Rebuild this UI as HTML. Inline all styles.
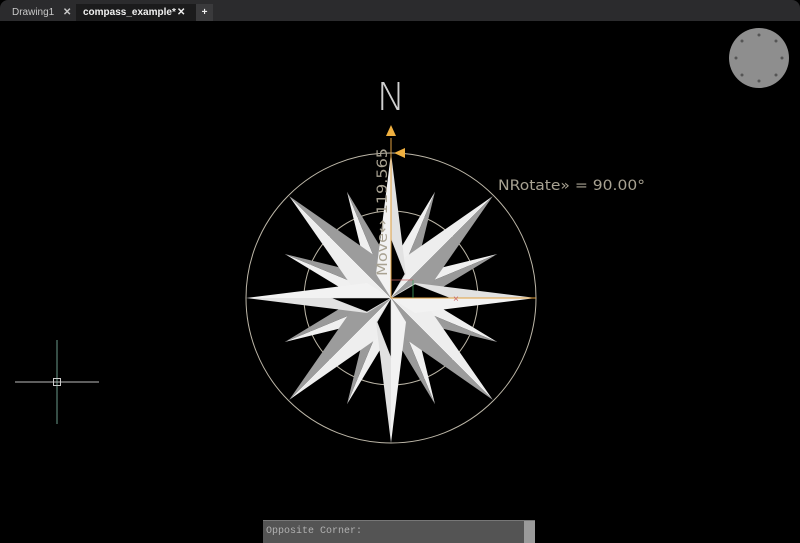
<!DOCTYPE html>
<html><head><meta charset="utf-8"><style>
html,body{margin:0;padding:0;background:#000;width:800px;height:542px;overflow:hidden;font-family:"Liberation Sans",sans-serif}
.bar{position:absolute;left:0;top:0;width:800px;height:21px;background:#2b2b2d;border-radius:8px 8px 0 0}
.tab{position:absolute;top:4px;height:17px;font-size:10px;color:#c8c8c8;line-height:17px}
.cmd{position:absolute;left:263px;top:520px;width:272px;height:22px;background:#545454;border-top:1px solid #777}
.cmd span{position:absolute;left:3px;top:5px;font-family:"Liberation Mono",monospace;font-size:10px;color:#b0b0b0}
.cmd i{position:absolute;right:0;top:0;width:11px;height:22px;background:#9a9a9a}
</style></head><body>
<div class="bar"></div>
<div class="tab" style="left:6px;width:68px;background:#2b2b2d;padding-left:6px">Drawing1<span style="position:absolute;left:57px;font-weight:bold">✕</span></div>
<div class="tab" style="left:76px;width:118px;background:#1b1b1c;color:#f0f0f0;font-weight:bold;padding-left:7px">compass_example*<span style="position:absolute;left:101px">✕</span></div>
<div class="tab" style="left:196px;width:17px;background:#3a3a3c;color:#eee;text-align:center;font-weight:bold">+</div>
<svg width="800" height="542" style="position:absolute;left:0;top:0">
<defs>
<g id="p3"><polygon points="0,0 0,-115 -10,-50" fill="#f0f0f0"/><polygon points="0,0 0,-115 10,-50" fill="#9a9a9a"/></g>
<g id="p2"><polygon points="0,0 0,-144 -19,-38" fill="#eeeeee"/><polygon points="0,0 0,-144 19,-38" fill="#9c9c9c"/></g>
<g id="p1"><polygon points="0,0 0,-145 -15,-24 " fill="#f2f2f2"/><polygon points="0,0 0,-145 15,-24" fill="#e2e2e2"/><polygon points="0,0 0,-60 14,-24" fill="#000" stroke="#ddd" stroke-width="0.6"/></g>
</defs>
<circle cx="759" cy="58" r="30" fill="#8e8e8e"/>
<g fill="#555"><circle cx="759" cy="35" r="1.5"/><circle cx="759" cy="81" r="1.5"/><circle cx="736" cy="58" r="1.5"/><circle cx="782" cy="58" r="1.5"/><circle cx="742" cy="41" r="1.5"/><circle cx="776" cy="41" r="1.5"/><circle cx="742" cy="75" r="1.5"/><circle cx="776" cy="75" r="1.5"/></g>
<g transform="translate(391,298)">
<circle r="145" fill="none" stroke="#bdb7a8" stroke-width="1"/>
<circle r="87" fill="none" stroke="#bdb7a8" stroke-width="1"/>
<use href="#p3" transform="rotate(-22.5)"/><use href="#p3" transform="rotate(22.5)"/><use href="#p3" transform="rotate(67.5)"/><use href="#p3" transform="rotate(112.5)"/><use href="#p3" transform="rotate(157.5)"/><use href="#p3" transform="rotate(202.5)"/><use href="#p3" transform="rotate(247.5)"/><use href="#p3" transform="rotate(292.5)"/>
<use href="#p2" transform="rotate(45)"/><use href="#p2" transform="rotate(135)"/><use href="#p2" transform="rotate(225)"/><use href="#p2" transform="rotate(315)"/>
<use href="#p1"/><use href="#p1" transform="rotate(90) scale(-1,1)"/><use href="#p1" transform="rotate(180)"/><use href="#p1" transform="rotate(270) scale(-1,1)"/>
<line x1="0" y1="0" x2="145" y2="0" stroke="#e0a040" stroke-width="1"/>
<line x1="0" y1="0" x2="0" y2="-160" stroke="#e0a040" stroke-width="1"/>
<line x1="0" y1="-18" x2="22" y2="-18" stroke="#c86464" stroke-width="0.8"/>
<line x1="22" y1="-18" x2="22" y2="0" stroke="#40a060" stroke-width="0.8"/>
<text x="62" y="4" fill="#c86464" font-size="10">×</text>
</g>
<polygon points="391,125 386,136 396,136" fill="#f0b040"/>
<polygon points="394,153 405,148 405,158" fill="#f0b040"/>
<text x="391" y="110" text-anchor="middle" fill="#d0d0d0" font-size="38" style="font-family:'DejaVu Sans',sans-serif;font-weight:200">N</text>
<text transform="translate(387,276) rotate(-90)" fill="#a8a292" font-size="14" textLength="128" lengthAdjust="spacingAndGlyphs" style="font-family:'DejaVu Sans',sans-serif">Move↔ 119.565</text>
<text x="498" y="190" fill="#a8a292" font-size="14" textLength="147" lengthAdjust="spacingAndGlyphs" style="font-family:'DejaVu Sans',sans-serif">NRotate» = 90.00°</text>
<line x1="57" y1="340" x2="57" y2="424" stroke="#6a9a8a" stroke-width="1"/>
<line x1="15" y1="382" x2="99" y2="382" stroke="#bbbbbb" stroke-width="1"/>
<rect x="53.5" y="378.5" width="7" height="7" fill="none" stroke="#ccc"/>
</svg>
<div class="cmd"><span>Opposite Corner:</span><i></i></div>
</body></html>
